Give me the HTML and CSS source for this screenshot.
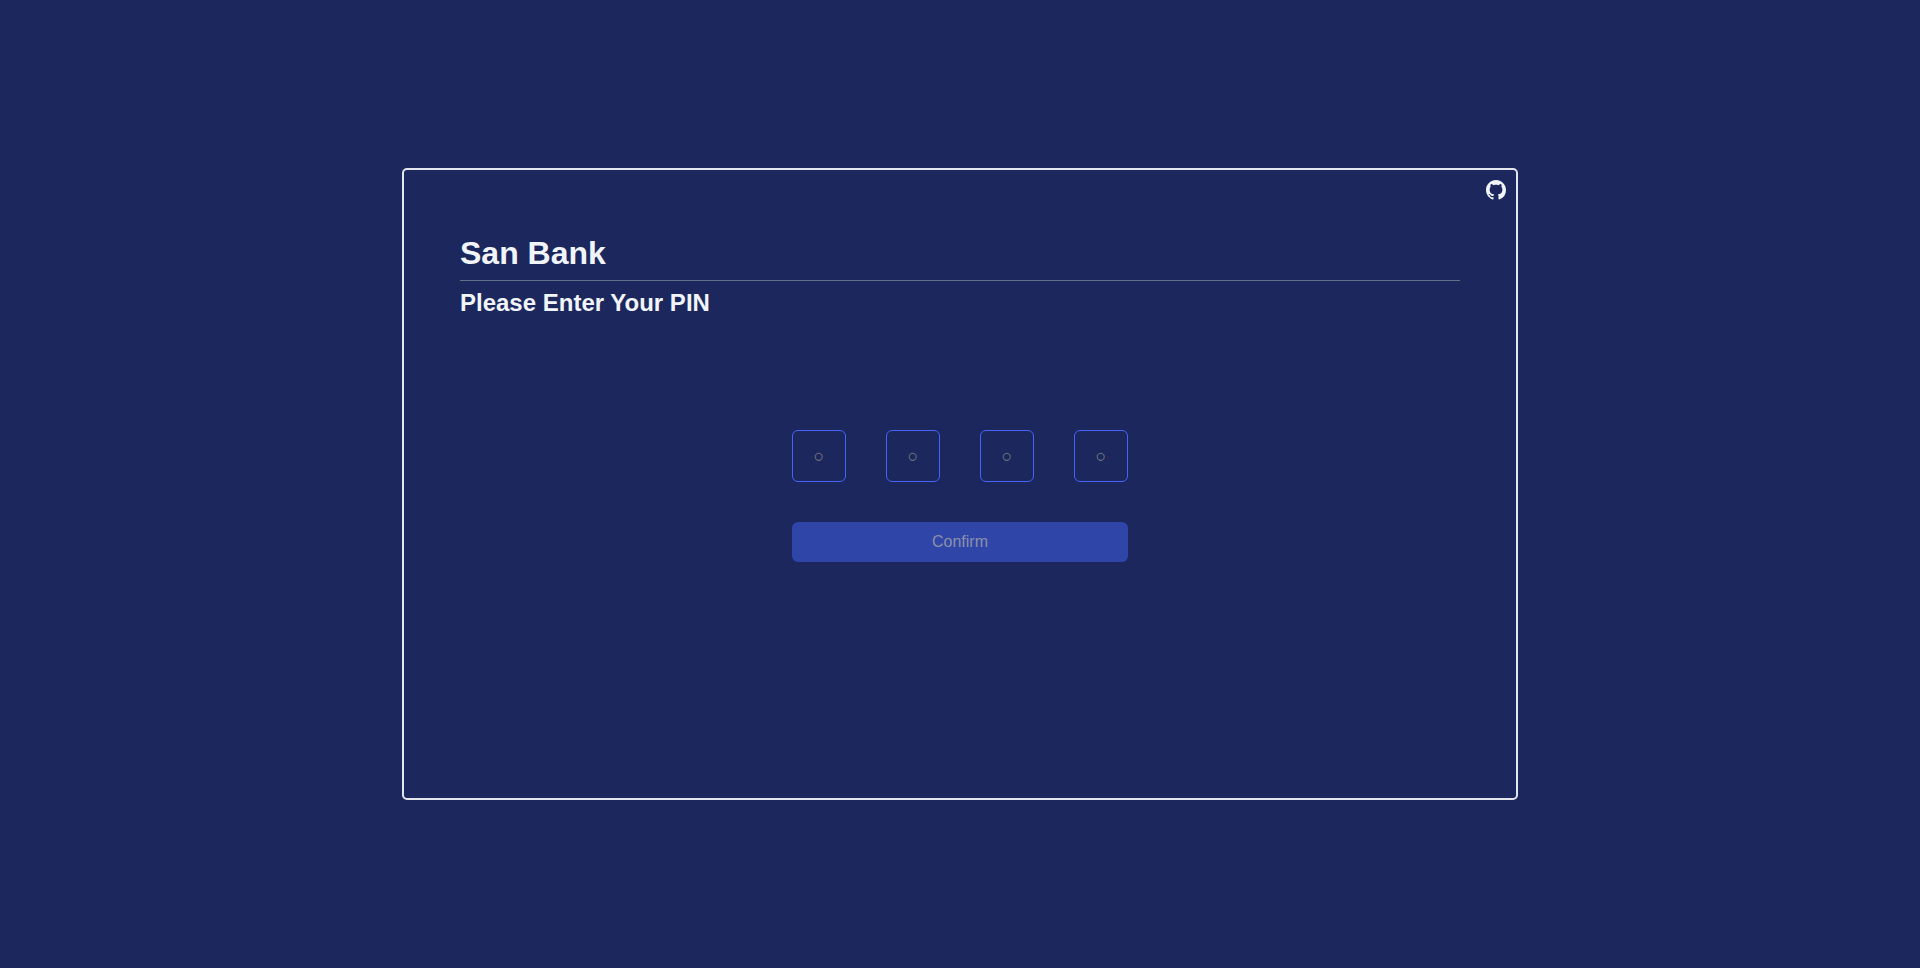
FILE: index.html
```html
<!DOCTYPE html>
<html lang="en">
<head>
<meta charset="utf-8">
<meta name="viewport" content="width=device-width, initial-scale=1">
<title>San Bank</title>
<link rel="stylesheet" href="styles.css">
</head>
<body>
<main class="card">
  <a class="source-link" href="#" aria-label="GitHub">
    <svg viewBox="0 0 16 16" width="20" height="20" fill="currentColor" aria-hidden="true"><path d="M8 0C3.58 0 0 3.58 0 8c0 3.54 2.29 6.53 5.47 7.59.4.07.55-.17.55-.38 0-.19-.01-.82-.01-1.49-2.01.37-2.53-.49-2.69-.94-.09-.23-.48-.94-.82-1.13-.28-.15-.68-.52-.01-.53.63-.01 1.08.58 1.23.82.72 1.21 1.87.87 2.33.66.07-.52.28-.87.51-1.07-1.78-.2-3.64-.89-3.64-3.95 0-.87.31-1.59.82-2.15-.08-.2-.36-1.02.08-2.12 0 0 .67-.21 2.2.82.64-.18 1.32-.27 2-.27s1.36.09 2 .27c1.53-1.04 2.2-.82 2.2-.82.44 1.1.16 1.92.08 2.12.51.56.82 1.27.82 2.15 0 3.07-1.87 3.75-3.65 3.95.29.25.54.73.54 1.48 0 1.07-.01 1.93-.01 2.2 0 .21.15.46.55.38A8.01 8.01 0 0 0 16 8c0-4.42-3.58-8-8-8z"/></svg>
  </a>
  <header class="header">
    <h1 class="title">San Bank</h1>
    <h2 class="subtitle">Please Enter Your PIN</h2>
  </header>
  <form class="pin-form">
    <div class="pin-row">
      <input class="pin-input" type="text" inputmode="numeric" maxlength="1" placeholder="○" aria-label="PIN digit 1">
      <input class="pin-input" type="text" inputmode="numeric" maxlength="1" placeholder="○" aria-label="PIN digit 2">
      <input class="pin-input" type="text" inputmode="numeric" maxlength="1" placeholder="○" aria-label="PIN digit 3">
      <input class="pin-input" type="text" inputmode="numeric" maxlength="1" placeholder="○" aria-label="PIN digit 4">
    </div>
    <button class="confirm" type="submit" disabled>Confirm</button>
  </form>
</main>
</body>
</html>
```

FILE: styles.css
```css
* {
  box-sizing: border-box;
}

body {
  margin: 0;
  min-height: 100vh;
  display: flex;
  align-items: center;
  justify-content: center;
  background: #1b275d;
  color: #f1f5f9;
  font-family: "Liberation Sans", Arial, sans-serif;
  font-size: 16px;
}

.card {
  position: relative;
  width: 100%;
  max-width: 1116px;
  min-height: 632px;
  padding: 56px;
  border: 2px solid #e2e5ec;
  border-radius: 5px;
}

.source-link {
  position: absolute;
  top: 10px;
  right: 10px;
  display: flex;
  color: #f1f5f9;
}

.title {
  margin: 0;
  border-bottom: 1px solid #64708b;
  font-size: 32px;
  line-height: 54px;
}

.subtitle {
  margin: 4px 0 0;
  font-size: 24px;
  line-height: 36px;
}

.pin-form {
  display: flex;
  flex-direction: column;
  gap: 40px;
  width: 336px;
  margin: 109px auto 0;
}

.pin-row {
  display: flex;
  gap: 40px;
}

.pin-input {
  flex: 1;
  min-width: 0;
  height: 52px;
  padding: 0;
  border: 1px solid #4464fa;
  border-radius: 6px;
  background: transparent;
  color: #f1f5f9;
  font: inherit;
  font-size: 18px;
  text-align: center;
}

.pin-input::placeholder {
  color: #808080;
}

.confirm {
  height: 40px;
  padding: 0 16px;
  border: 0;
  border-radius: 6px;
  background: #2f45a7;
  color: #8b91ab;
  font: inherit;
}
```
